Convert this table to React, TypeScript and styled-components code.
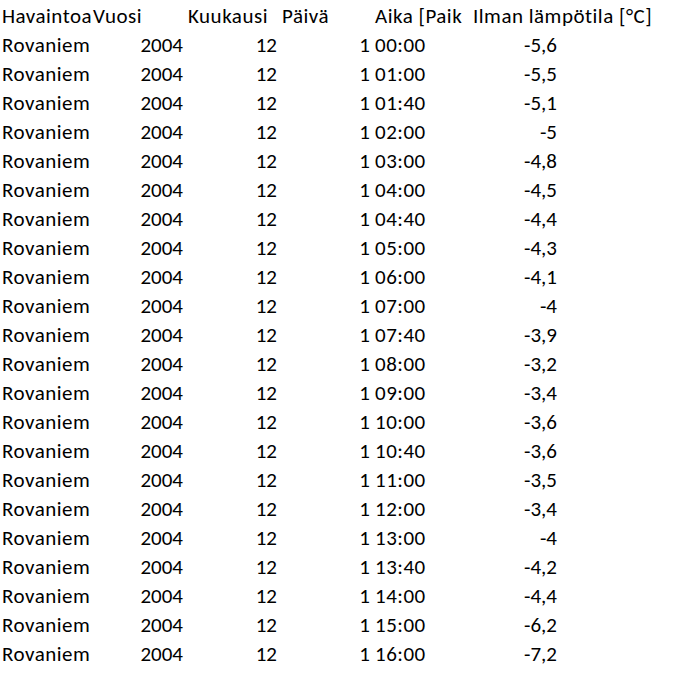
import React from "react";
import styled, { createGlobalStyle } from "styled-components";

const GlobalStyle = createGlobalStyle`
  html, body {
    margin: 0;
    padding: 0;
    background: #ffffff;
  }
`;

const Sheet = styled.div`
  width: 691px;
  padding-top: 2px;
  font-family: Calibri, Carlito, Lato, "Liberation Sans", sans-serif;
  font-size: 21px;
  color: #000000;
`;

const Row = styled.div`
  display: grid;
  grid-template-columns: 91px 95px 94px 93px 98px 89px;
  height: 29px;
  line-height: 29px;
`;

// numbers sit at the right edge of their cell, text at the left
const Cell = styled.div<{ $num?: boolean; $spill?: boolean }>`
  padding: 0 3px 0 2px;
  text-align: ${(p) => (p.$num ? "right" : "left")};
  letter-spacing: ${(p) => (p.$num ? "0" : "0.5px")};
  white-space: nowrap;
  overflow: ${(p) => (p.$spill ? "visible" : "hidden")};
`;

const readings: [string, string][] = [
  ["00:00", "-5,6"],
  ["01:00", "-5,5"],
  ["01:40", "-5,1"],
  ["02:00", "-5"],
  ["03:00", "-4,8"],
  ["04:00", "-4,5"],
  ["04:40", "-4,4"],
  ["05:00", "-4,3"],
  ["06:00", "-4,1"],
  ["07:00", "-4"],
  ["07:40", "-3,9"],
  ["08:00", "-3,2"],
  ["09:00", "-3,4"],
  ["10:00", "-3,6"],
  ["10:40", "-3,6"],
  ["11:00", "-3,5"],
  ["12:00", "-3,4"],
  ["13:00", "-4"],
  ["13:40", "-4,2"],
  ["14:00", "-4,4"],
  ["15:00", "-6,2"],
  ["16:00", "-7,2"],
];

const App = () => {
  return (
    <>
      <GlobalStyle />
      <Sheet>
        <Row>
          <Cell>Havaintoa</Cell>
          <Cell>Vuosi</Cell>
          <Cell>Kuukausi</Cell>
          <Cell>Päivä</Cell>
          <Cell>Aika [Paik</Cell>
          <Cell $spill>Ilman lämpötila [°C]</Cell>
        </Row>
        {readings.map(([time, temp], i) => (
          <Row key={i}>
            <Cell>Rovaniem</Cell>
            <Cell $num>2004</Cell>
            <Cell $num>12</Cell>
            <Cell $num>1</Cell>
            <Cell>{time}</Cell>
            <Cell $num>{temp}</Cell>
          </Row>
        ))}
      </Sheet>
    </>
  );
};

export default App;
